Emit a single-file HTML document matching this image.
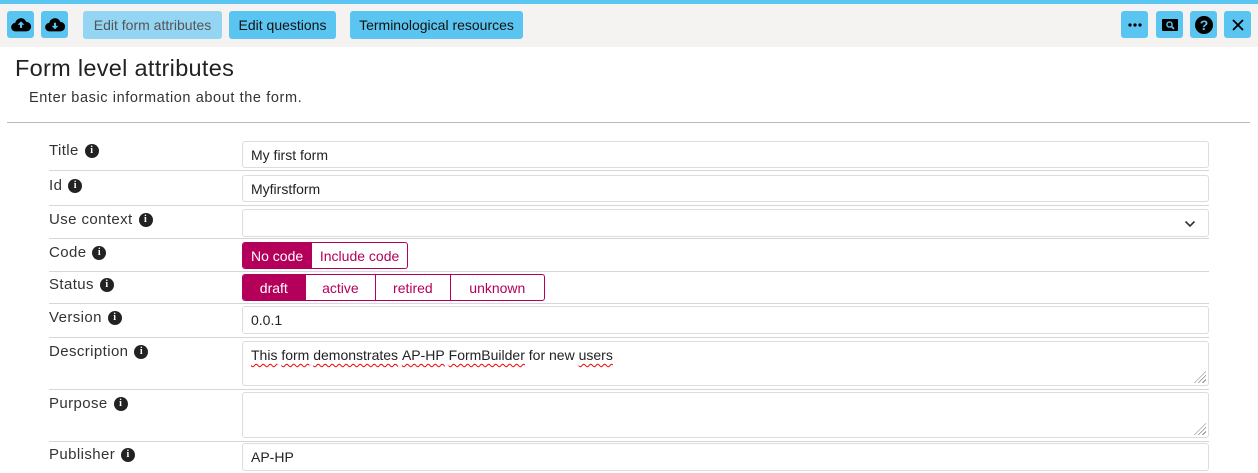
<!DOCTYPE html>
<html><head><meta charset="utf-8"><style>
*{box-sizing:border-box;margin:0;padding:0}
body{width:1258px;height:473px;overflow:hidden;background:#fff;font-family:"Liberation Sans",sans-serif;color:#222;position:relative}
.a{position:absolute}
.top{left:0;top:0;width:1258px;height:4px;background:#5bc5f2}
.tb{left:0;top:4px;width:1258px;height:43px;background:#f4f3f2}
.ib{width:27px;height:27px;background:#5bc5f2;border-radius:3px;top:11px;display:flex;align-items:center;justify-content:center}
.btn{top:11px;height:28px;background:#5bc5f2;border-radius:3px;font-size:14px;line-height:28px;text-align:center;color:#111}
h1{position:absolute;left:15px;top:55px;font-size:23.5px;font-weight:normal;color:#222;letter-spacing:.3px}
.sub{left:29px;top:90px;font-size:14.5px;color:#333;letter-spacing:.6px}
.hr{left:7px;top:122px;width:1243px;height:1px;background:#bbb}
.lab{left:49px;font-size:15px;color:#333;letter-spacing:.4px;display:flex;align-items:center}
.i{display:inline-block;width:14px;height:14px;border-radius:50%;background:#222;color:#fff;font-size:10px;font-weight:bold;line-height:14px;text-align:center;margin-left:6px;font-family:"Liberation Serif",serif}
.sep{left:49px;width:1160px;height:1px;background:#d6d6d6}
.in{left:242px;width:967px;border:1px solid #ddd;border-radius:3px;font-size:14px;padding-left:8px;color:#222;display:flex;align-items:center}
.seg{top:0;height:27px;border:1px solid #b5005b;border-radius:3px;display:flex;overflow:hidden;left:242px;font-size:14px}
.seg div{border-right:1px solid #b5005b;color:#b5005b;display:flex;align-items:center;justify-content:center}
.seg div:last-child{border-right:none}
.seg .on{background:#b5005b;color:#fff}
.grip{position:absolute;right:2px;bottom:2px;width:12px;height:12px;background:repeating-linear-gradient(135deg,transparent 0 2px,#888 2px 3px);clip-path:polygon(100% 0,100% 100%,0 100%)}
.sq{text-decoration:underline wavy #e00;text-underline-offset:3px;text-decoration-thickness:1px}
</style></head><body>
<div class="a top"></div>
<div class="a tb"></div>
<div class="a ib" style="left:7px"><svg width="22" height="17" viewBox="0 0 20 16"><path d="M5 14.5a4 4 0 0 1-.5-8A5.5 5.5 0 0 1 15 5.5a4.5 4.5 0 0 1 0 9z" fill="#000"/><path d="M10 5l3.2 3.2H11v3H9v-3H6.8z" fill="#5bc5f2"/></svg></div>
<div class="a ib" style="left:41px"><svg width="22" height="17" viewBox="0 0 20 16"><path d="M5 14.5a4 4 0 0 1-.5-8A5.5 5.5 0 0 1 15 5.5a4.5 4.5 0 0 1 0 9z" fill="#000"/><path d="M10 12.5l3.2-3.2H11v-3H9v3H6.8z" fill="#5bc5f2"/></svg></div>
<div class="a btn" style="left:83px;width:139px;background:#93d5f2;color:#555">Edit form attributes</div>
<div class="a btn" style="left:229px;width:107px">Edit questions</div>
<div class="a btn" style="left:350px;width:173px">Terminological resources</div>
<div class="a ib" style="left:1121px"><svg width="14" height="4" viewBox="0 0 14 4"><circle cx="2" cy="2" r="1.6"/><circle cx="7" cy="2" r="1.6"/><circle cx="12" cy="2" r="1.6"/></svg></div>
<div class="a ib" style="left:1156px"><svg width="18" height="14" viewBox="0 0 18 14"><rect x="1" y="1" width="16" height="12" rx="1" fill="#000"/><circle cx="8.5" cy="6.5" r="2.6" fill="none" stroke="#5bc5f2" stroke-width="1.4"/><path d="M10.5 8.5l2.5 2.5" stroke="#5bc5f2" stroke-width="1.6"/></svg></div>
<div class="a ib" style="left:1190px"><svg width="20" height="20" viewBox="0 0 20 20"><circle cx="10" cy="10" r="9" fill="#000"/><text x="10" y="15" text-anchor="middle" font-size="14" font-weight="bold" fill="#5bc5f2" font-family="Liberation Sans">?</text></svg></div>
<div class="a ib" style="left:1224px"><svg width="14" height="14" viewBox="0 0 14 14"><path d="M2 2l10 10M12 2L2 12" stroke="#000" stroke-width="1.8"/></svg></div>

<h1>Form level attributes</h1>
<div class="a sub">Enter basic information about the form.</div>
<div class="a hr"></div>

<div class="a lab" style="top:142px">Title<span class="i">i</span></div>
<div class="a in" style="top:141px;height:27px">My first form</div>
<div class="a sep" style="top:170px"></div>
<div class="a lab" style="top:177px">Id<span class="i">i</span></div>
<div class="a in" style="top:175px;height:27px">Myfirstform</div>
<div class="a sep" style="top:205px"></div>
<div class="a lab" style="top:211px">Use context<span class="i">i</span></div>
<div class="a in" style="top:209px;height:28px"><svg style="position:absolute;right:12px;top:10px" width="12" height="8" viewBox="0 0 12 8"><path d="M1.5 1.5l4.5 4.5 4.5-4.5" fill="none" stroke="#333" stroke-width="1.6"/></svg></div>
<div class="a sep" style="top:238px"></div>
<div class="a lab" style="top:244px">Code<span class="i">i</span></div>
<div class="a seg" style="top:242px;width:166px"><div class="on" style="width:70px">No code</div><div style="width:96px">Include code</div></div>
<div class="a sep" style="top:271px"></div>
<div class="a lab" style="top:276px">Status<span class="i">i</span></div>
<div class="a seg" style="top:274px;width:303px"><div class="on" style="width:63px">draft</div><div style="width:71px">active</div><div style="width:75px">retired</div><div style="width:94px">unknown</div></div>
<div class="a sep" style="top:303px"></div>
<div class="a lab" style="top:309px">Version<span class="i">i</span></div>
<div class="a in" style="top:306px;height:28px">0.0.1</div>
<div class="a sep" style="top:337px"></div>
<div class="a lab" style="top:343px">Description<span class="i">i</span></div>
<div class="a in" style="top:341px;height:45px;align-items:flex-start;padding-top:5px"><span class="sq">This</span>&nbsp;<span class="sq">form</span>&nbsp;<span class="sq">demonstrates</span>&nbsp;<span class="sq">AP-HP</span>&nbsp;<span class="sq">FormBuilder</span>&nbsp;for new&nbsp;<span class="sq">users</span><div class="grip"></div></div>
<div class="a sep" style="top:389px"></div>
<div class="a lab" style="top:395px">Purpose<span class="i">i</span></div>
<div class="a in" style="top:392px;height:46px"><div class="grip"></div></div>
<div class="a sep" style="top:441px"></div>
<div class="a lab" style="top:446px">Publisher<span class="i">i</span></div>
<div class="a in" style="top:443px;height:28px">AP-HP</div>
</body></html>
